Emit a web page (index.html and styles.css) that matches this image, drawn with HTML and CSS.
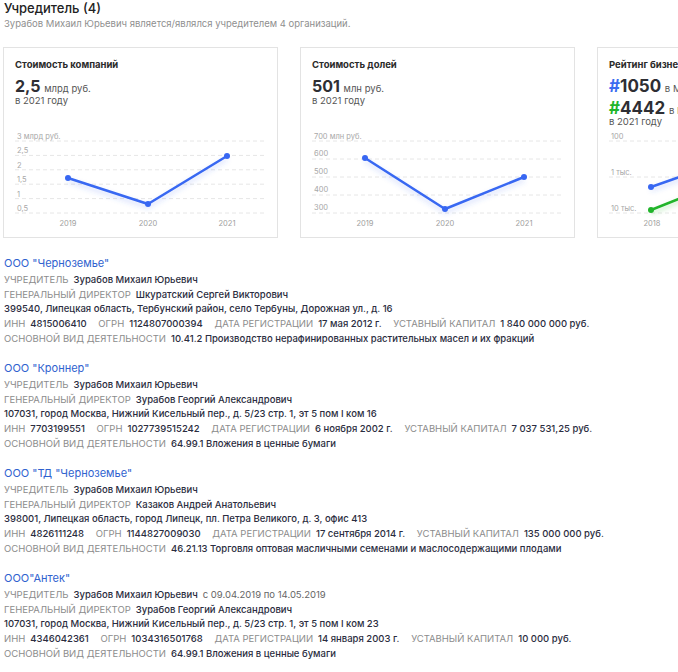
FILE: index.html
```html
<!DOCTYPE html>
<html lang="ru">
<head>
  <meta charset="UTF-8">
  <meta name="viewport" content="width=device-width, initial-scale=1.0">
  <title>Учредитель</title>
  <link rel="stylesheet" href="styles.css">
</head>
<body>
  <div class="page">
    <h2 class="head-title">Учредитель (4)</h2>
    <p class="head-sub">Зурабов Михаил Юрьевич является/являлся учредителем 4 организаций.</p>

    <!-- Cards -->
    <div class="cards">
      <div class="card">
        <div class="card-title">Стоимость компаний</div>
        <div class="big"><b>2,5</b> млрд руб.</div>
        <div class="year">в 2021 году</div>
        <svg class="chart" width="253" height="100" viewBox="0 0 253 100">
          <defs>
            <filter id="glow1" x="-20%" y="-40%" width="140%" height="180%">
              <feDropShadow dx="0" dy="3" stdDeviation="2.5" flood-color="#3a66f0" flood-opacity="0.25"/>
            </filter>
          </defs>
          <g class="grid">
            <line x1="0" y1="11" x2="252" y2="11"/>
            <line x1="0" y1="25.4" x2="252" y2="25.4"/>
            <line x1="0" y1="39.8" x2="252" y2="39.8"/>
            <line x1="0" y1="54.2" x2="252" y2="54.2"/>
            <line x1="0" y1="68.6" x2="252" y2="68.6"/>
            <line x1="0" y1="83" x2="252" y2="83"/>
          </g>
          <g class="axis">
            <text x="2" y="9">3 млрд руб.</text>
            <text x="2" y="23.4">2,5</text>
            <text x="2" y="37.8">2</text>
            <text x="2" y="52.2">1,5</text>
            <text x="2" y="66.6">1</text>
            <text x="2" y="81">0,5</text>
          </g>
          <g class="years">
            <text x="53" y="96">2019</text>
            <text x="133" y="96">2020</text>
            <text x="212" y="96">2021</text>
          </g>
          <g filter="url(#glow1)">
            <polyline class="line blue" points="53,48 133,74 212,26"/>
          </g>
          <circle class="dot blue" cx="53" cy="48" r="3"/>
          <circle class="dot blue" cx="133" cy="74" r="3"/>
          <circle class="dot blue" cx="212" cy="26" r="3"/>
        </svg>
      </div>

      <div class="card">
        <div class="card-title">Стоимость долей</div>
        <div class="big"><b>501</b> млн руб.</div>
        <div class="year">в 2021 году</div>
        <svg class="chart" width="253" height="100" viewBox="0 0 253 100">
          <g class="grid">
            <line x1="0" y1="11" x2="252" y2="11"/>
            <line x1="0" y1="29" x2="252" y2="29"/>
            <line x1="0" y1="47" x2="252" y2="47"/>
            <line x1="0" y1="65" x2="252" y2="65"/>
            <line x1="0" y1="83" x2="252" y2="83"/>
          </g>
          <g class="axis">
            <text x="2" y="9">700 млн руб.</text>
            <text x="2" y="26">600</text>
            <text x="2" y="44">500</text>
            <text x="2" y="62">400</text>
            <text x="2" y="80">300</text>
          </g>
          <g class="years">
            <text x="53" y="96">2019</text>
            <text x="133" y="96">2020</text>
            <text x="212" y="96">2021</text>
          </g>
          <g filter="url(#glow1)">
            <polyline class="line blue" points="53,28 133,79 212,47"/>
          </g>
          <circle class="dot blue" cx="53" cy="28" r="3"/>
          <circle class="dot blue" cx="133" cy="79" r="3"/>
          <circle class="dot blue" cx="212" cy="47" r="3"/>
        </svg>
      </div>

      <div class="card">
        <div class="card-title">Рейтинг бизнеса</div>
        <div class="big rank"><b><span class="hash-blue">#</span>1050</b> в Москве</div>
        <div class="big rank"><b><span class="hash-green">#</span>4442</b> в России</div>
        <div class="year">в 2021 году</div>
        <svg class="chart" width="253" height="100" viewBox="0 0 253 100">
          <defs>
            <filter id="glow2" x="-20%" y="-40%" width="140%" height="180%">
              <feDropShadow dx="0" dy="3" stdDeviation="2.5" flood-color="#20b020" flood-opacity="0.25"/>
            </filter>
          </defs>
          <g class="grid">
            <line x1="0" y1="11" x2="252" y2="11"/>
            <line x1="0" y1="47" x2="252" y2="47"/>
            <line x1="0" y1="83" x2="252" y2="83"/>
          </g>
          <g class="axis">
            <text x="2" y="9">100</text>
            <text x="2" y="45">1 тыс.</text>
            <text x="2" y="81">10 тыс.</text>
          </g>
          <g class="years">
            <text x="43" y="96">2018</text>
            <text x="122" y="96">2019</text>
            <text x="202" y="96">2020</text>
          </g>
          <g filter="url(#glow1)">
            <polyline class="line blue" points="42,57 122,29 202,22"/>
          </g>
          <g filter="url(#glow2)">
            <polyline class="line green" points="42,80 122,48 202,40"/>
          </g>
          <circle class="dot blue" cx="42" cy="57" r="3"/>
          <circle class="dot green" cx="42" cy="80" r="3"/>
        </svg>
      </div>
    </div>

    <!-- Companies -->
    <div class="company">
      <a class="company-name" href="#">ООО "Черноземье"</a>
      <div class="row"><span class="lbl">Учредитель</span><span class="val">Зурабов Михаил Юрьевич</span></div>
      <div class="row"><span class="lbl">Генеральный директор</span><span class="val">Шкуратский Сергей Викторович</span></div>
      <div class="row"><span class="val">399540, Липецкая область, Тербунский район, село Тербуны, Дорожная ул., д. 16</span></div>
      <div class="row">
        <span class="lbl">ИНН</span><span class="val sep">4815006410</span>
        <span class="lbl">ОГРН</span><span class="val sep">1124807000394</span>
        <span class="lbl">Дата регистрации</span><span class="val sep">17 мая 2012 г.</span>
        <span class="lbl">Уставный капитал</span><span class="val">1 840 000 000 руб.</span>
      </div>
      <div class="row"><span class="lbl">Основной вид деятельности</span><span class="val">10.41.2 Производство нерафинированных растительных масел и их фракций</span></div>
    </div>

    <div class="company">
      <a class="company-name" href="#">ООО "Кроннер"</a>
      <div class="row"><span class="lbl">Учредитель</span><span class="val">Зурабов Михаил Юрьевич</span></div>
      <div class="row"><span class="lbl">Генеральный директор</span><span class="val">Зурабов Георгий Александрович</span></div>
      <div class="row"><span class="val">107031, город Москва, Нижний Кисельный пер., д. 5/23 стр. 1, эт 5 пом I ком 16</span></div>
      <div class="row">
        <span class="lbl">ИНН</span><span class="val sep">7703199551</span>
        <span class="lbl">ОГРН</span><span class="val sep">1027739515242</span>
        <span class="lbl">Дата регистрации</span><span class="val sep">6 ноября 2002 г.</span>
        <span class="lbl">Уставный капитал</span><span class="val">7 037 531,25 руб.</span>
      </div>
      <div class="row"><span class="lbl">Основной вид деятельности</span><span class="val">64.99.1 Вложения в ценные бумаги</span></div>
    </div>

    <div class="company">
      <a class="company-name" href="#">ООО "ТД "Черноземье"</a>
      <div class="row"><span class="lbl">Учредитель</span><span class="val">Зурабов Михаил Юрьевич</span></div>
      <div class="row"><span class="lbl">Генеральный директор</span><span class="val">Казаков Андрей Анатольевич</span></div>
      <div class="row"><span class="val">398001, Липецкая область, город Липецк, пл. Петра Великого, д. 3, офис 413</span></div>
      <div class="row">
        <span class="lbl">ИНН</span><span class="val sep">4826111248</span>
        <span class="lbl">ОГРН</span><span class="val sep">1144827009030</span>
        <span class="lbl">Дата регистрации</span><span class="val sep">17 сентября 2014 г.</span>
        <span class="lbl">Уставный капитал</span><span class="val">135 000 000 руб.</span>
      </div>
      <div class="row"><span class="lbl">Основной вид деятельности</span><span class="val">46.21.13 Торговля оптовая масличными семенами и маслосодержащими плодами</span></div>
    </div>

    <div class="company">
      <a class="company-name" href="#">ООО"Антек"</a>
      <div class="row"><span class="lbl">Учредитель</span><span class="val">Зурабов Михаил Юрьевич</span><span class="period">с 09.04.2019 по 14.05.2019</span></div>
      <div class="row"><span class="lbl">Генеральный директор</span><span class="val">Зурабов Георгий Александрович</span></div>
      <div class="row"><span class="val">107031, город Москва, Нижний Кисельный пер., д. 5/23 стр. 1, эт 5 пом I ком 23</span></div>
      <div class="row">
        <span class="lbl">ИНН</span><span class="val sep">4346042361</span>
        <span class="lbl">ОГРН</span><span class="val sep">1034316501768</span>
        <span class="lbl">Дата регистрации</span><span class="val sep">14 января 2003 г.</span>
        <span class="lbl">Уставный капитал</span><span class="val">10 000 руб.</span>
      </div>
      <div class="row"><span class="lbl">Основной вид деятельности</span><span class="val">64.99.1 Вложения в ценные бумаги</span></div>
    </div>
  </div>
</body>
</html>
```

FILE: styles.css
```css
html, body {
  margin: 0;
  padding: 0;
  background: #fff;
  overflow-x: hidden;
}

body {
  font-family: Inter, "Noto Sans", sans-serif;
  color: #2b2d3b;
}

.page {
  padding: 0 3px;
}

.head-title {
  margin: 0;
  font-size: 13px;
  line-height: 16px;
  font-weight: 500;
  color: #222;
  padding-left: 1px;
}

.head-sub {
  margin: 1px 0 0;
  font-size: 9.5px;
  line-height: 14px;
  color: #8f8f8f;
  padding-left: 1px;
}

.cards {
  display: flex;
  gap: 22px;
  margin-top: 16px;
  width: 900px;
}

.card {
  flex: none;
  width: 275px;
  height: 191px;
  box-sizing: border-box;
  border: 1px solid #e3e3e3;
  padding: 10px 11px 7px;
  display: flex;
  flex-direction: column;
}

.card-title {
  font-size: 9.5px;
  line-height: 14px;
  font-weight: 700;
  color: #2a2a2a;
}

.big {
  margin-top: 6px;
  font-size: 9.5px;
  line-height: 17px;
  height: 17px;
  color: #555;
}

.big b {
  font-size: 16px;
  line-height: 17px;
  font-weight: 700;
  color: #2e2e33;
  margin-right: 1px;
}

.big.rank {
  margin-top: 6px;
  line-height: 16px;
  height: 16px;
}

.big.rank b {
  font-size: 17px;
  line-height: 16px;
}

.hash-blue { color: #3a6cf0; }
.hash-green { color: #22b52a; }

.year {
  font-size: 9.5px;
  line-height: 12px;
  color: #555;
}

.chart {
  display: block;
  margin-top: auto;
  flex: none;
  overflow: visible;
}

.chart .grid line {
  stroke: #e6e6e6;
  stroke-width: 1;
  stroke-dasharray: 4 3;
}

.chart .axis text {
  font-family: Inter, sans-serif;
  font-size: 7.5px;
  fill: #a8a8a8;
}

.chart .years text {
  font-family: Inter, sans-serif;
  font-size: 7.5px;
  fill: #a0a0a0;
  text-anchor: middle;
}

.line {
  fill: none;
  stroke-width: 2.5;
  stroke-linejoin: round;
}

.line.blue { stroke: #3867f2; }
.line.green { stroke: #20b42a; }

.dot.blue { fill: #3867f2; }
.dot.green { fill: #20b42a; }

.company {
  margin-top: 16px;
}

.company + .company {
  margin-top: 12.5px;
}

.company-name {
  display: block;
  font-size: 11px;
  line-height: 18px;
  margin-bottom: 1px;
  color: #2f62cf;
  text-decoration: none;
  padding-left: 1px;
}

.row {
  font-size: 9.5px;
  line-height: 14.7px;
  white-space: nowrap;
  padding-left: 1px;
}

.lbl {
  text-transform: uppercase;
  color: #8c8c8c;
  margin-right: 5px;
}

.val {
  font-weight: 500;
  color: #2b2d40;
}

.val.sep {
  margin-right: 9px;
}

.period {
  color: #666;
  margin-left: 5px;
}
```
